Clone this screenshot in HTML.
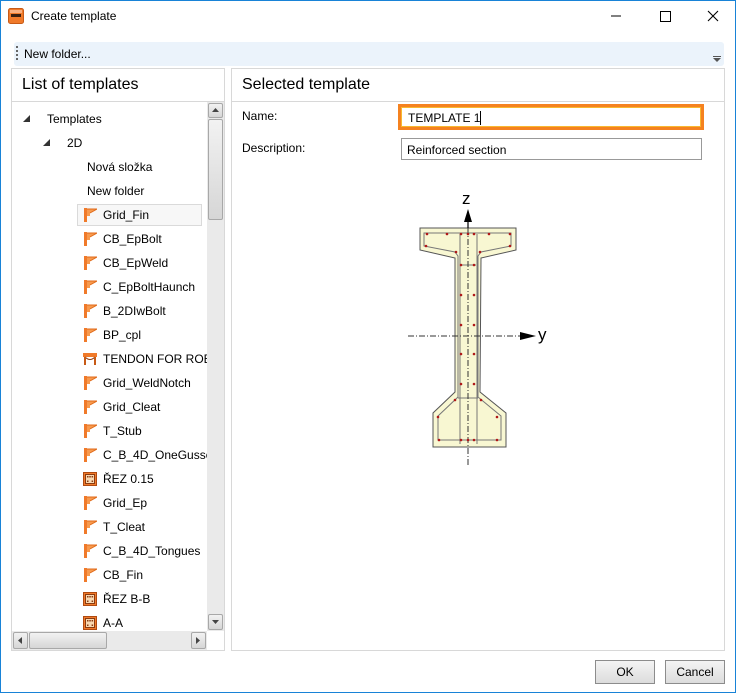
<!DOCTYPE html>
<html><head><meta charset="utf-8"><style>
*{box-sizing:border-box;margin:0;padding:0}
body{width:736px;height:693px;background:#fff;font-family:"Liberation Sans",sans-serif;font-size:12px;color:#000;position:relative;overflow:hidden}
.win{position:absolute;left:0;top:0;width:736px;height:693px;border:1px solid #1883d7}
.abs{position:absolute}
.row{position:absolute;left:0;height:22px;line-height:22px;white-space:nowrap}
.ic{position:absolute;left:83px;top:4px;width:14px;height:14px}
.tx{position:absolute;left:103px}
.btn{position:absolute;height:24px;width:60px;border:1px solid #8c8c8c;background:linear-gradient(#f4f4f4,#dcdcdc);text-align:center;line-height:22px;font-size:12px}
.sbtn{position:absolute;background:linear-gradient(#f2f2f2,#d6d6d6);border:1px solid #a8a8a8;border-radius:2px}
</style></head><body>
<div class="win"></div>
<svg class="abs" style="left:8px;top:8px" width="16" height="16"><rect x="0.5" y="0.5" width="15" height="15" rx="2" fill="#f07a2a" stroke="#c75a16"/><rect x="3" y="6" width="10" height="3" fill="#3a2010"/><rect x="2" y="2" width="12" height="3" fill="#f8b080"/></svg>
<div class="abs" style="left:31px;top:9px;font-size:12px">Create template</div>
<svg class="abs" style="left:610px;top:8px" width="120" height="16"><line x1="1" y1="8" x2="11" y2="8" stroke="#000"/><rect x="50.5" y="3.5" width="10" height="10" fill="none" stroke="#000"/><path d="M98 3 L108 13 M108 3 L98 13" stroke="#000" stroke-width="1.1"/></svg>
<div class="abs" style="left:14px;top:42px;width:710px;height:24px;background:#ebf3fb;border-radius:3px"></div>
<div class="abs" style="left:16px;top:46px;width:2px;height:14px;background:repeating-linear-gradient(#666 0 2px,transparent 2px 4px)"></div>
<div class="abs" style="left:24px;top:47px">New folder...</div>
<div class="abs" style="left:713px;top:56px;width:8px;height:1px;background:#555"></div>
<svg class="abs" style="left:713px;top:58px" width="8" height="5"><path d="M0 0H8L4 4Z" fill="#555"/></svg>
<div class="abs" style="left:11px;top:68px;width:214px;height:583px;border:1px solid #d8d8d8"></div>
<div class="abs" style="left:12px;top:101px;width:212px;height:1px;background:#d8d8d8"></div>
<div class="abs" style="left:22px;top:76px;font-size:16px">List of templates</div>
<div class="abs" style="left:12px;top:103px;width:195px;height:528px;overflow:hidden">
<svg class="abs" style="left:11px;top:12px" width="8" height="8"><path d="M7 0V7H0Z" fill="#333"/></svg>
<div class="row" style="top:5px;left:35px">Templates</div>
<svg class="abs" style="left:31px;top:36px" width="8" height="8"><path d="M7 0V7H0Z" fill="#333"/></svg>
<div class="row" style="top:29px;left:55px">2D</div>
<div class="row" style="top:53px;left:75px">Nová složka</div>
<div class="row" style="top:77px;left:75px">New folder</div>
<div class="abs" style="left:65px;top:101px;width:125px;height:22px;border:1px solid #dadada;background:#f7f7f7"></div>
</div>
<div id="items" class="abs" style="left:0;top:103px;width:207px;height:528px;overflow:hidden"></div>
<div class="abs" style="left:207px;top:102px;width:17px;height:529px;background:#eaeaea"></div>
<div class="sbtn" style="left:208px;top:103px;width:15px;height:15px"></div>
<svg class="abs" style="left:212px;top:108px" width="8" height="5"><path d="M0 4H7L3.5 0Z" fill="#444"/></svg>
<div class="sbtn" style="left:208px;top:119px;width:15px;height:101px"></div>
<div class="sbtn" style="left:208px;top:614px;width:15px;height:16px"></div>
<svg class="abs" style="left:212px;top:620px" width="8" height="5"><path d="M0 0H7L3.5 4Z" fill="#444"/></svg>
<div class="abs" style="left:12px;top:631px;width:195px;height:19px;background:#eaeaea"></div>
<div class="sbtn" style="left:13px;top:632px;width:15px;height:17px"></div>
<svg class="abs" style="left:18px;top:637px" width="5" height="8"><path d="M4 0V7L0 3.5Z" fill="#444"/></svg>
<div class="sbtn" style="left:29px;top:632px;width:78px;height:17px"></div>
<div class="sbtn" style="left:191px;top:632px;width:15px;height:17px"></div>
<svg class="abs" style="left:196px;top:637px" width="5" height="8"><path d="M0 0V7L4 3.5Z" fill="#444"/></svg>
<div class="abs" style="left:231px;top:68px;width:494px;height:583px;border:1px solid #d8d8d8"></div>
<div class="abs" style="left:232px;top:101px;width:492px;height:1px;background:#d8d8d8"></div>
<div class="abs" style="left:242px;top:76px;font-size:16px">Selected template</div>
<div class="abs" style="left:242px;top:109px">Name:</div>
<div class="abs" style="left:242px;top:141px">Description:</div>
<div class="abs" style="left:398px;top:104px;width:306px;height:26px;border:3px solid #f58220;box-shadow:inset 0 0 0 1px #f8b830"></div>
<div class="abs" style="left:408px;top:111px">TEMPLATE 1<span style="display:inline-block;width:1px;height:14px;background:#000;vertical-align:-3px"></span></div>
<div class="abs" style="left:401px;top:138px;width:301px;height:22px;border:1px solid #999"></div>
<div class="abs" style="left:407px;top:143px">Reinforced section</div>
<svg class="abs" style="left:400px;top:180px" width="160" height="285" viewBox="400 180 160 285">
<path d="M420 228H516V250L481 258L480 392L506 413V447H433V413L455 392V258L420 250Z" fill="#f8f7d2" stroke="#555" stroke-width="1"/>
<path d="M424 233H511V246L481 252L478 256V397L501 416V440H438V416L458 397V256L455 252L424 246Z" fill="none" stroke="#777" stroke-width="1"/>
<path d="M460 234V444M477 234V444M461 265H476M458 398H478" stroke="#777" fill="none"/>
<line x1="468" y1="228" x2="468" y2="465" stroke="#333" stroke-dasharray="6,2,1,2"/>
<line x1="408" y1="336" x2="522" y2="336" stroke="#333" stroke-dasharray="6,2,1,2"/>
<path d="M468 209L464 222H472Z" fill="#000"/><line x1="468" y1="220" x2="468" y2="228" stroke="#000" stroke-width="1.2"/>
<path d="M536 336L520 332V340Z" fill="#000"/>
<text x="462" y="204" font-family="Liberation Sans" font-size="17">z</text>
<text x="538" y="340" font-family="Liberation Sans" font-size="17">y</text>
<g fill="#b01818">
<circle cx="427" cy="234" r="1.3"/><circle cx="447" cy="234" r="1.3"/><circle cx="461" cy="234" r="1.3"/><circle cx="468" cy="234" r="1.3"/><circle cx="474" cy="234" r="1.3"/><circle cx="489" cy="234" r="1.3"/><circle cx="510" cy="234" r="1.3"/>
<circle cx="426" cy="246" r="1.3"/><circle cx="510" cy="246" r="1.3"/><circle cx="456" cy="252" r="1.3"/><circle cx="480" cy="252" r="1.3"/>
<circle cx="461" cy="265" r="1.3"/><circle cx="474" cy="265" r="1.3"/>
<circle cx="461" cy="295" r="1.3"/><circle cx="474" cy="295" r="1.3"/><circle cx="461" cy="325" r="1.3"/><circle cx="474" cy="325" r="1.3"/>
<circle cx="461" cy="354" r="1.3"/><circle cx="474" cy="354" r="1.3"/><circle cx="461" cy="384" r="1.3"/><circle cx="474" cy="384" r="1.3"/>
<circle cx="455" cy="400" r="1.3"/><circle cx="481" cy="400" r="1.3"/><circle cx="438" cy="417" r="1.3"/><circle cx="497" cy="417" r="1.3"/>
<circle cx="439" cy="440" r="1.3"/><circle cx="461" cy="440" r="1.3"/><circle cx="468" cy="440" r="1.3"/><circle cx="474" cy="440" r="1.3"/><circle cx="497" cy="440" r="1.3"/>
</g>
</svg>
<div class="btn" style="left:595px;top:660px">OK</div>
<div class="btn" style="left:665px;top:660px">Cancel</div>
<script>
var items=[["f","Grid_Fin"],["f","CB_EpBolt"],["f","CB_EpWeld"],["f","C_EpBoltHaunch"],["f","B_2DIwBolt"],["f","BP_cpl"],["t","TENDON FOR ROB"],["f","Grid_WeldNotch"],["f","Grid_Cleat"],["f","T_Stub"],["f","C_B_4D_OneGusset"],["r","ŘEZ 0.15"],["f","Grid_Ep"],["f","T_Cleat"],["f","C_B_4D_Tongues"],["f","CB_Fin"],["r","ŘEZ B-B"],["r","A-A"]];
var icons={f:'<svg class="ic" viewBox="0 0 14 14"><rect x="1" y="0" width="3" height="14" fill="#f07a2a"/><path d="M4 1H14L7 5V8H4Z" fill="#f79a4e"/><path d="M4 1H14L7 5" fill="none" stroke="#e06a1a"/></svg>',
t:'<svg class="ic" viewBox="0 0 14 14"><rect x="0" y="1" width="14" height="4" fill="#f07a2a"/><path d="M2 5Q7 10 12 5" fill="none" stroke="#8a3a10"/><rect x="1" y="5" width="2" height="8" fill="#c75a16"/><rect x="11" y="5" width="2" height="8" fill="#c75a16"/></svg>',
r:'<svg class="ic" viewBox="0 0 14 14"><rect x="0.5" y="0.5" width="13" height="13" fill="#f07a2a" stroke="#b04a10"/><rect x="2.5" y="2.5" width="9" height="9" fill="#f8d8b0" stroke="#8a3a10"/><g fill="#8a3a10"><rect x="4" y="4" width="1.5" height="1.5"/><rect x="6.3" y="4" width="1.5" height="1.5"/><rect x="8.6" y="4" width="1.5" height="1.5"/><rect x="4" y="8.5" width="1.5" height="1.5"/><rect x="8.6" y="8.5" width="1.5" height="1.5"/></g></svg>'};
var h="";items.forEach(function(it,i){h+='<div class="row" style="top:'+(101+i*24)+'px;width:207px">'+icons[it[0]]+'<span class="tx">'+it[1]+'</span></div>';});
document.getElementById("items").innerHTML=h;
</script>
</body></html>
